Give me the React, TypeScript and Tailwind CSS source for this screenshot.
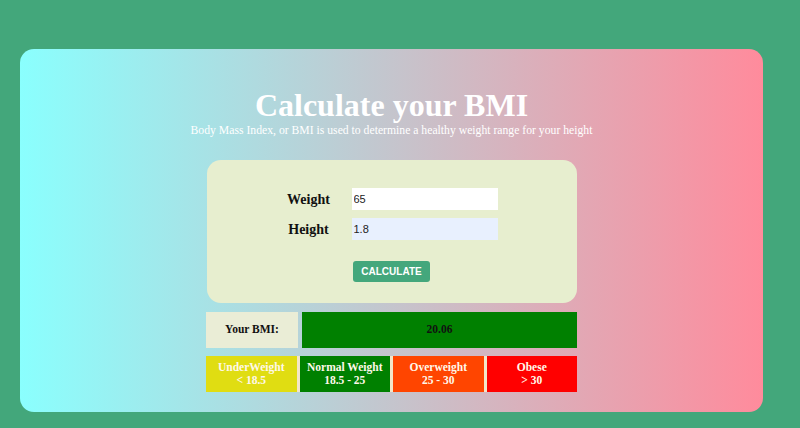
import React, { useState } from "react";

const serif = { fontFamily: '"Liberation Serif", "Times New Roman", serif' };

const categories = [
  { title: "UnderWeight", range: "< 18.5", bg: "bg-[#e0dd12]" },
  { title: "Normal Weight", range: "18.5 - 25", bg: "bg-[#008000]" },
  { title: "Overweight", range: "25 - 30", bg: "bg-[#ff4500]" },
  { title: "Obese", range: "> 30", bg: "bg-[#ff0000]" },
];

const App = () => {
  const [state, setState] = useState({ weight: "65", height: "1.8" });

  const onChange = (e: any) => {
    setState((prev) => ({ ...prev, [e.target.name]: e.target.value }));
  };

  return (
    <div className="w-[800px] h-[428px] bg-[#43a77b] overflow-hidden pt-[49px] pl-[20px]" style={serif}>
      <div className="w-[743px] h-[363px] rounded-[14px] bg-[linear-gradient(to_right,#8afffe,#ff8b9c)] flex flex-col items-center">
        <h1 className="mt-[38px] text-[32px] leading-[36px] font-bold text-white">
          Calculate your BMI
        </h1>
        <p className="text-[11.7px] leading-[15px] text-white">
          Body Mass Index, or BMI is used to determine a healthy weight range for your height
        </p>

        <div className="mt-[22px] w-[370px] h-[143px] rounded-[14px] bg-[#e7eecf] flex flex-col pt-[28px]">
          <div className="flex items-center">
            <label className="ml-[58px] w-[88px] text-center text-[14px] font-bold text-[#111]">Weight</label>
            <input
              name="weight"
              value={state.weight}
              onChange={onChange}
              className="ml-[-1px] w-[146px] h-[22px] bg-white px-[2px] text-[11px] text-[#222] outline-none"
              style={{ fontFamily: '"Liberation Sans", Arial, sans-serif' }}
            />
          </div>
          <div className="flex items-center mt-[8px]">
            <label className="ml-[58px] w-[88px] text-center text-[14px] font-bold text-[#111]">Height</label>
            <input
              name="height"
              value={state.height}
              onChange={onChange}
              className="ml-[-1px] w-[146px] h-[22px] bg-[#e8f0fe] px-[2px] text-[11px] text-[#222] outline-none"
              style={{ fontFamily: '"Liberation Sans", Arial, sans-serif' }}
            />
          </div>
          <div className="flex justify-center mt-[21px]">
            <button
              className="w-[77px] h-[21px] rounded-[3px] bg-[#44a77c] text-white text-[10px] font-bold"
              style={{ fontFamily: '"Liberation Sans", Arial, sans-serif' }}
            >
              CALCULATE
            </button>
          </div>
        </div>

        <div className="mt-[9px] w-[371px] h-[36px] flex gap-[4px]">
          <div className="w-[92px] bg-[#eaedd6] flex items-center justify-center text-[11.5px] font-bold text-[#111]">
            Your BMI:
          </div>
          <div className="flex-1 bg-[#008000] flex items-center justify-center text-[11.5px] font-bold text-[#111]">
            20.06
          </div>
        </div>

        <div className="mt-[8px] w-[371px] h-[36px] flex gap-[3px] bg-[#f3e6c8]">
          {categories.map((c) => (
            <div
              key={c.title}
              className={`flex-1 ${c.bg} flex flex-col items-center justify-center text-[11.5px] leading-[13px] font-bold text-[#fff8ea]`}
            >
              <span>{c.title}</span>
              <span>{c.range}</span>
            </div>
          ))}
        </div>
      </div>
    </div>
  );
};

export default App;
